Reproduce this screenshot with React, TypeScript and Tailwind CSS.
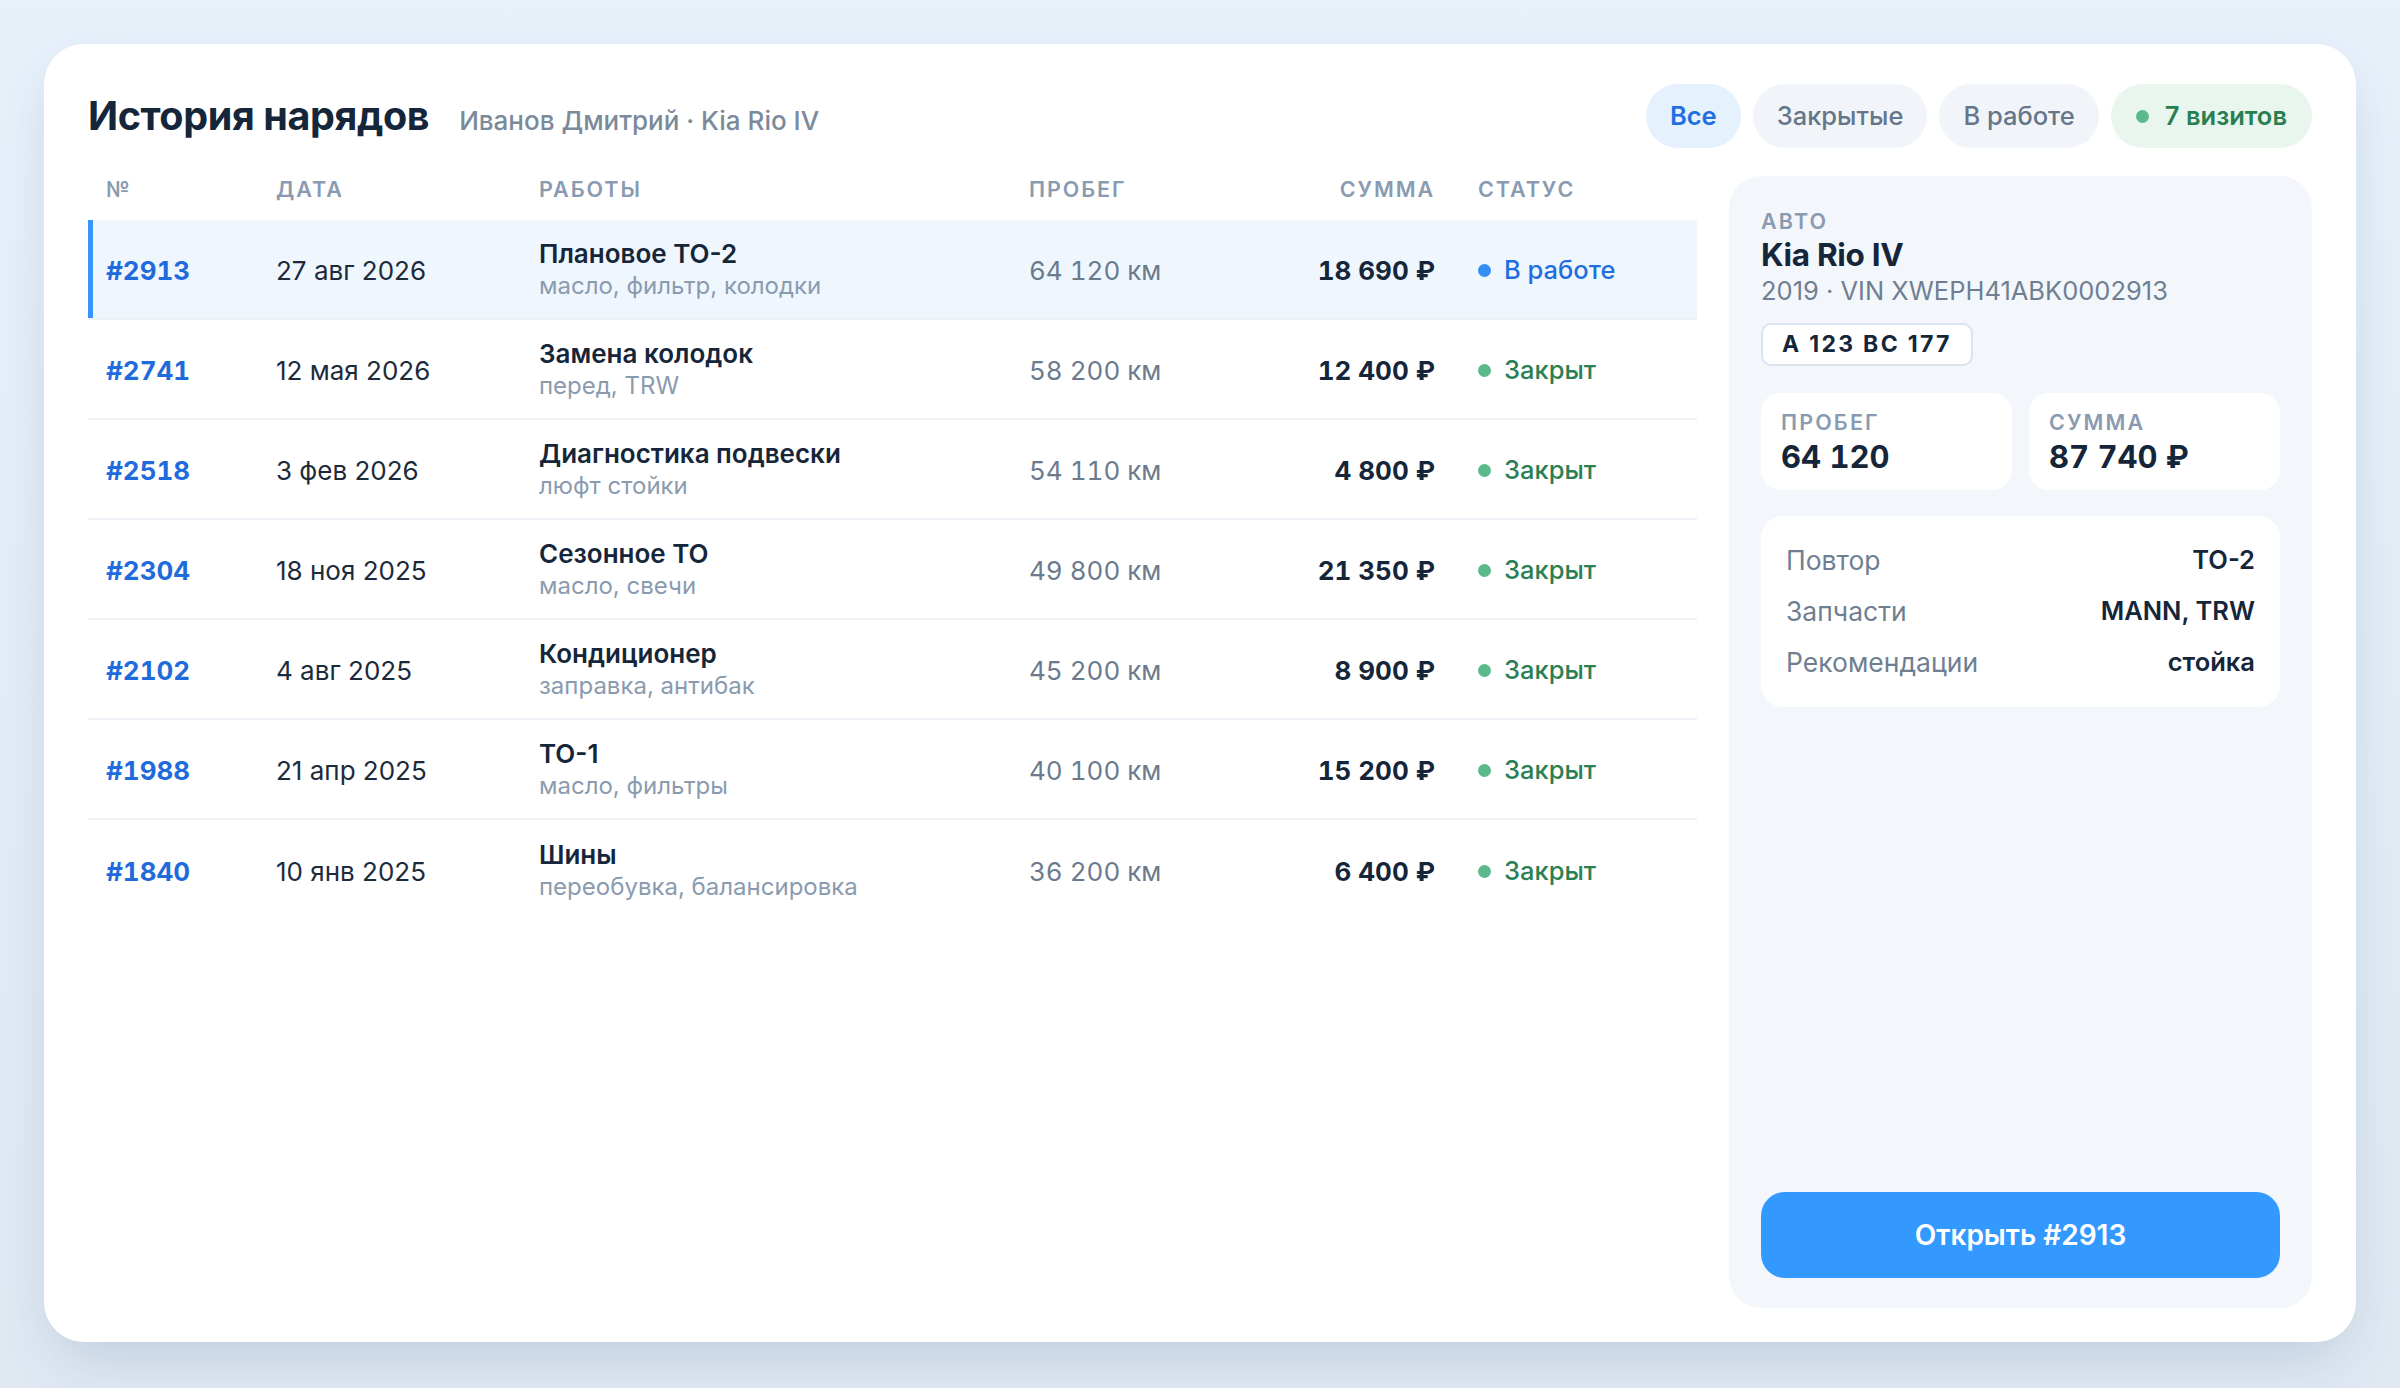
import React from "react";

type Row = {
  id: string;
  date: string;
  title: string;
  sub: string;
  km: string;
  sum: string;
  open?: boolean;
};

const rows: Row[] = [
  { id: "#2913", date: "27 авг 2026", title: "Плановое ТО-2", sub: "масло, фильтр, колодки", km: "64 120 км", sum: "18 690 ₽", open: true },
  { id: "#2741", date: "12 мая 2026", title: "Замена колодок", sub: "перед, TRW", km: "58 200 км", sum: "12 400 ₽" },
  { id: "#2518", date: "3 фев 2026", title: "Диагностика подвески", sub: "люфт стойки", km: "54 110 км", sum: "4 800 ₽" },
  { id: "#2304", date: "18 ноя 2025", title: "Сезонное ТО", sub: "масло, свечи", km: "49 800 км", sum: "21 350 ₽" },
  { id: "#2102", date: "4 авг 2025", title: "Кондиционер", sub: "заправка, антибак", km: "45 200 км", sum: "8 900 ₽" },
  { id: "#1988", date: "21 апр 2025", title: "ТО-1", sub: "масло, фильтры", km: "40 100 км", sum: "15 200 ₽" },
  { id: "#1840", date: "10 янв 2025", title: "Шины", sub: "переобувка, балансировка", km: "36 200 км", sum: "6 400 ₽" },
];

const cols = "grid grid-cols-[170px_263px_490px_230px_176px_1fr] px-[18px]";

export default function App() {
  return (
    <div className="min-h-[1388px] w-full bg-gradient-to-b from-[#e8f1fa] to-[#e0e9f2] p-[44px] font-['Inter',sans-serif]">
      <div className="flex h-[1298px] flex-col rounded-[40px] bg-white px-[44px] pt-[40px] pb-[34px] shadow-[0_24px_60px_-12px_rgba(40,80,130,0.2)]">
        {/* шапка */}
        <div className="flex h-[64px] items-center justify-between">
          <div className="flex items-baseline gap-[30px] pt-[5px]">
            <h1 className="text-[39.5px] font-bold leading-none tracking-[-0.01em] text-[#15263a]">История нарядов</h1>
            <span className="text-[26px] font-medium text-[#7b8a9b]">Иванов Дмитрий · Kia Rio IV</span>
          </div>
          <div className="flex gap-[12px] text-[25.5px] font-medium">
            <button className="h-[64px] rounded-full bg-[#e6f1fe] px-[24px] font-semibold text-[#1f6fe0]">Все</button>
            <button className="h-[64px] rounded-full bg-[#f1f5f9] px-[24px] text-[#66768a]">Закрытые</button>
            <button className="h-[64px] rounded-full bg-[#f1f5f9] px-[24px] text-[#66768a]">В работе</button>
            <div className="flex h-[64px] items-center gap-[16px] rounded-full bg-[#e8f6ee] px-[25px] font-semibold text-[#2a7f52]">
              <span className="h-[13px] w-[13px] rounded-full bg-[#5cb98b]" />
              7 визитов
            </div>
          </div>
        </div>

        <div className="mt-[28px] flex flex-1 gap-[32px]">
          {/* таблица */}
          <div className="flex-1">
            <div className={`${cols} h-[44px] items-start pt-[1px] text-[21.5px] font-semibold leading-[24px] tracking-[0.09em] text-[#8a9bb1]`}>
              <div>№</div>
              <div>ДАТА</div>
              <div>РАБОТЫ</div>
              <div>ПРОБЕГ</div>
              <div className="text-right">СУММА</div>
              <div className="pl-[43px]">СТАТУС</div>
            </div>
            {rows.map((r, i) => (
              <div
                key={r.id}
                className={`${cols} h-[100px] items-center pt-[2px] ${i < rows.length - 1 ? "border-b-2 border-[#eef2f6]" : ""} ${
                  r.open ? "bg-[#eff6fe] shadow-[inset_5px_0_0_#3595fb]" : ""
                }`}
              >
                <div className="text-[26px] font-bold tabular-nums text-[#1f6bdc]">{r.id}</div>
                <div className="text-[26px] text-[#1c2b3c]">{r.date}</div>
                <div className="flex flex-col">
                  <span className="text-[26px] font-semibold leading-[32px] text-[#15263a]">{r.title}</span>
                  <span className="text-[24px] leading-[32px] text-[#8a9bb0]">{r.sub}</span>
                </div>
                <div className="text-[26px] tabular-nums text-[#6b7b8d]">{r.km}</div>
                <div className="text-right text-[26px] font-bold tabular-nums text-[#15263a]">{r.sum}</div>
                <div className="flex items-center gap-[13px] pl-[43px] text-[25.5px] font-medium">
                  {r.open ? (
                    <>
                      <span className="h-[13px] w-[13px] rounded-full bg-[#3290f5]" />
                      <span className="text-[#1f6fe0]">В работе</span>
                    </>
                  ) : (
                    <>
                      <span className="h-[13px] w-[13px] rounded-full bg-[#5cb98b]" />
                      <span className="text-[#2a8052]">Закрыт</span>
                    </>
                  )}
                </div>
              </div>
            ))}
          </div>

          {/* панель авто */}
          <aside className="flex w-[583px] flex-col rounded-[32px] bg-[#f3f7fc] px-[32px] pt-[33px] pb-[30px]">
            <div className="text-[21.5px] font-semibold leading-[24px] tracking-[0.1em] text-[#8a9bb1]">АВТО</div>
            <div className="mt-[2px] text-[31.5px] font-bold leading-[40px] tracking-[-0.01em] text-[#15263a]">Kia Rio IV</div>
            <div className="text-[25.5px] leading-[32px] text-[#6f7f91]">2019 · VIN XWEPH41ABK0002913</div>
            <div className="mt-[16px] flex">
              <span className="h-[43px] rounded-[10px] border-2 border-[#d8e4ef] bg-white px-[19px] text-[23px] font-bold leading-[39px] tracking-[0.1em] text-[#15263a]">
                А 123 ВС 177
              </span>
            </div>

            <div className="mt-[27px] grid grid-cols-2 gap-[17px]">
              <div className="h-[97px] rounded-[20px] bg-white px-[20px] pt-[17px]">
                <div className="text-[21.5px] font-semibold leading-[24px] tracking-[0.1em] text-[#8a9bb1]">ПРОБЕГ</div>
                <div className="mt-[4px] text-[31px] font-bold leading-[38px] tabular-nums text-[#15263a]">64 120</div>
              </div>
              <div className="h-[97px] rounded-[20px] bg-white px-[20px] pt-[17px]">
                <div className="text-[21.5px] font-semibold leading-[24px] tracking-[0.1em] text-[#8a9bb1]">СУММА</div>
                <div className="mt-[4px] text-[31px] font-bold leading-[38px] tabular-nums text-[#15263a]">87 740 ₽</div>
              </div>
            </div>

            <div className="mt-[26px] rounded-[22px] bg-white px-[25px] pt-[19px] pb-[19px]">
              <div className="flex h-[51px] items-center justify-between">
                <span className="text-[26.5px] text-[#6f7f91]">Повтор</span>
                <span className="text-[25.5px] font-semibold text-[#15263a]">ТО-2</span>
              </div>
              <div className="flex h-[51px] items-center justify-between">
                <span className="text-[26.5px] text-[#6f7f91]">Запчасти</span>
                <span className="text-[25.5px] font-semibold text-[#15263a]">MANN, TRW</span>
              </div>
              <div className="flex h-[51px] items-center justify-between">
                <span className="text-[26.5px] text-[#6f7f91]">Рекомендации</span>
                <span className="text-[25.5px] font-semibold text-[#15263a]">стойка</span>
              </div>
            </div>

            <button className="mt-auto h-[86px] w-full rounded-[24px] bg-[#3399ff] text-[28px] font-semibold text-white">
              Открыть #2913
            </button>
          </aside>
        </div>
      </div>
    </div>
  );
}
